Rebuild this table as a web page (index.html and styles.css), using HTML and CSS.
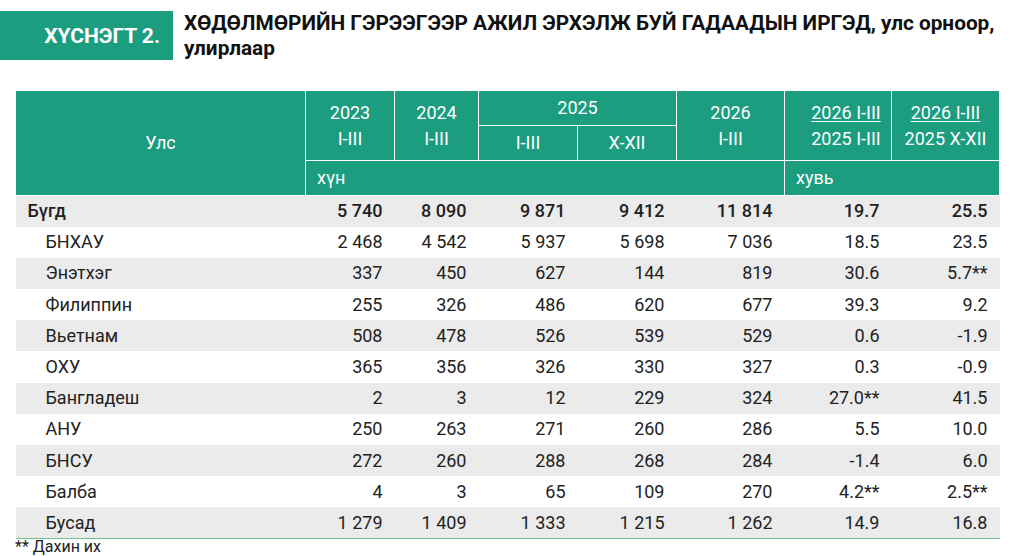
FILE: index.html
```html
<!DOCTYPE html>
<html lang="mn">
<head>
<meta charset="utf-8">
<title>Хүснэгт 2</title>
<link rel="stylesheet" href="styles.css">
</head>
<body>
<header class="title-bar">
  <div class="label">ХҮСНЭГТ 2.</div>
  <h1 class="title">ХӨДӨЛМӨРИЙН ГЭРЭЭГЭЭР АЖИЛ ЭРХЭЛЖ БУЙ ГАДААДЫН ИРГЭД, улс орноор, улирлаар</h1>
</header>
<table class="data">
  <colgroup>
    <col class="c-country"><col class="c-23"><col class="c-24"><col class="c-25a"><col class="c-25b"><col class="c-26"><col class="c-r1"><col class="c-r2">
  </colgroup>
  <thead>
    <tr>
      <th rowspan="3" class="h-country">Улс</th>
      <th rowspan="2">2023<br>I-III</th>
      <th rowspan="2">2024<br>I-III</th>
      <th colspan="2">2025</th>
      <th rowspan="2">2026<br>I-III</th>
      <th rowspan="2" class="h-r1"><u>2026 I-III</u><br>2025 I-III</th>
      <th rowspan="2"><u>2026 I-III</u><br>2025 X-XII</th>
    </tr>
    <tr>
      <th>I-III</th>
      <th>X-XII</th>
    </tr>
    <tr>
      <th colspan="5" class="unit">хүн</th>
      <th colspan="2" class="unit">хувь</th>
    </tr>
  </thead>
  <tbody>
    <tr class="total"><td>Бүгд</td><td>5 740</td><td>8 090</td><td>9 871</td><td>9 412</td><td>11 814</td><td>19.7</td><td>25.5</td></tr>
    <tr><td>БНХАУ</td><td>2 468</td><td>4 542</td><td>5 937</td><td>5 698</td><td>7 036</td><td>18.5</td><td>23.5</td></tr>
    <tr><td>Энэтхэг</td><td>337</td><td>450</td><td>627</td><td>144</td><td>819</td><td>30.6</td><td>5.7**</td></tr>
    <tr><td>Филиппин</td><td>255</td><td>326</td><td>486</td><td>620</td><td>677</td><td>39.3</td><td>9.2</td></tr>
    <tr><td>Вьетнам</td><td>508</td><td>478</td><td>526</td><td>539</td><td>529</td><td>0.6</td><td>-1.9</td></tr>
    <tr><td>ОХУ</td><td>365</td><td>356</td><td>326</td><td>330</td><td>327</td><td>0.3</td><td>-0.9</td></tr>
    <tr><td>Бангладеш</td><td>2</td><td>3</td><td>12</td><td>229</td><td>324</td><td>27.0**</td><td>41.5</td></tr>
    <tr><td>АНУ</td><td>250</td><td>263</td><td>271</td><td>260</td><td>286</td><td>5.5</td><td>10.0</td></tr>
    <tr><td>БНСУ</td><td>272</td><td>260</td><td>288</td><td>268</td><td>284</td><td>-1.4</td><td>6.0</td></tr>
    <tr><td>Балба</td><td>4</td><td>3</td><td>65</td><td>109</td><td>270</td><td>4.2**</td><td>2.5**</td></tr>
    <tr><td>Бусад</td><td>1 279</td><td>1 409</td><td>1 333</td><td>1 215</td><td>1 262</td><td>14.9</td><td>16.8</td></tr>
  </tbody>
</table>
<p class="note">** Дахин их</p>
</body>
</html>
```

FILE: styles.css
```css
html, body {
  margin: 0;
  padding: 0;
  background: #ffffff;
}
body {
  font-family: Roboto, "Liberation Sans", sans-serif;
  color: #222222;
  width: 1024px;
  height: 556px;
  overflow: hidden;
}

.title-bar {
  display: flex;
  align-items: flex-start;
  gap: 11px;
  padding-top: 11px;
}
.label {
  flex: 0 0 auto;
  width: 173px;
  height: 49px;
  box-sizing: border-box;
  background: #1c9d7f;
  color: #ffffff;
  font-weight: 700;
  font-size: 21px;
  display: flex;
  align-items: center;
  justify-content: flex-end;
  padding-right: 13px;
}
.title {
  margin: 0;
  font-size: 20.8px;
  line-height: 25px;
  font-weight: 700;
  color: #111111;
  width: 832px;
}

.data {
  margin: 29px 0 0 15px;
  border-collapse: collapse;
  table-layout: fixed;
  width: 984px;
  font-size: 18px;
}
.c-country { width: 290px; }
.c-23 { width: 89px; }
.c-24 { width: 84px; }
.c-25a { width: 99px; }
.c-25b { width: 99px; }
.c-26 { width: 108px; }
.c-r1 { width: 107px; }
.c-r2 { width: 108px; }

.data thead tr { height: 35px; }
.data th {
  background: #1c9d7f;
  color: #ffffff;
  font-weight: 400;
  line-height: 26px;
  padding: 0;
  text-align: center;
  vertical-align: middle;
  border: 1.5px solid #ffffff;
}
.data th u {
  text-decoration-thickness: 1px;
  text-underline-offset: 2px;
}
.data th.h-r1 { padding-left: 16px; }
.data th.unit {
  text-align: left;
  padding-left: 11px;
}

.data tbody tr { height: 31.2px; }
.data tbody tr:nth-child(odd) { background: #ebebeb; }
.data td {
  padding: 0 12px 0 0;
  text-align: right;
  white-space: nowrap;
  line-height: 22px;
}
.data td:first-child {
  text-align: left;
  padding-left: 30px;
}
.data tr.total td { font-weight: 500; }
.data tr.total td:first-child { padding-left: 12px; }
.data tbody tr:last-child td { border-bottom: 1px solid #72c28e; }

.note {
  margin: 0 0 0 15px;
  font-size: 16px;
  line-height: 16px;
  color: #222222;
}
```
